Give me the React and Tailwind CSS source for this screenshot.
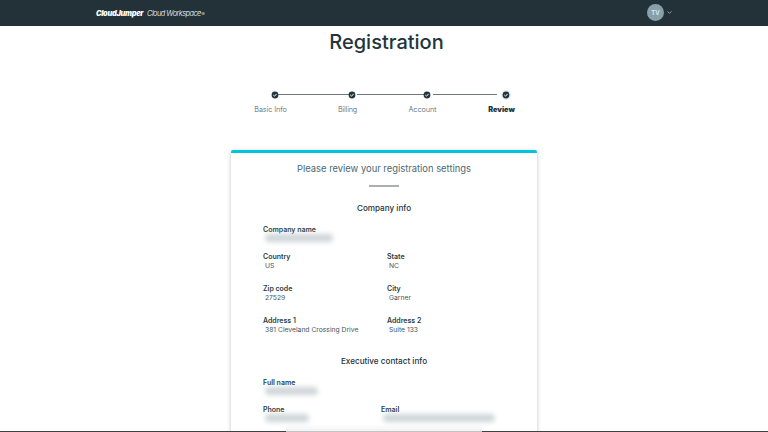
import { ChevronDown } from "lucide-react";

function Check({ halo }) {
  return (
    <svg viewBox="0 0 12 12" className="h-3 w-3 shrink-0">
      {halo && <circle cx="6" cy="6" r="5" fill="#e8eef0" />}
      <circle cx="6" cy="6" r="3.4" fill="#22343c" />
      <path d="M4.3 6l1.2 1.2 2.1-2.3" fill="none" stroke="#fff" strokeWidth="1" />
    </svg>
  );
}

function Field({ label, value, className = "w-[124px]", redacted }) {
  return (
    <div className={`${className} shrink-0`}>
      <div className="h-[9px] text-[7px] leading-[9px] font-semibold text-[#2b3d46]">{label}</div>
      {redacted ? (
        <div className={`${redacted} ml-[2px] h-[8px] rounded-full bg-[#bac4c8] opacity-70 blur-[2.5px]`} />
      ) : (
        <div className="pl-[2px] text-[6.75px] leading-[10px] text-[#3f5660]">{value}</div>
      )}
    </div>
  );
}

export default function App() {
  return (
    <div className="flex h-[432px] w-[768px] flex-col overflow-hidden bg-white font-['Inter',sans-serif] whitespace-nowrap text-[#22343c]">
      <header className="flex h-[26px] shrink-0 items-center justify-between bg-[#233239] pr-[95px] pl-24 text-white">
        <div className="flex items-center gap-[3px] pt-px text-[7.4px] italic">
          <span className="w-[48px] font-black tracking-[-0.3px]">CloudJumper</span>
          <span className="font-light tracking-[-0.5px]">Cloud Workspace<span className="ml-[0.5px] text-[5px]">®</span></span>
        </div>
        <div className="flex items-center gap-[2px] pb-px">
          <span className="flex h-[17px] w-[17px] items-center justify-center rounded-full bg-[#86a1ab] text-[6px] font-semibold text-[#e4ecef]">TV</span>
          <ChevronDown size={7} color="#a9bbc2" strokeWidth={2.5} />
        </div>
      </header>

      <h1 className="mt-[4px] h-6 shrink-0 text-center text-[20px] leading-[25px] font-medium">
        <span className="pl-[5px]">Registration</span>
      </h1>

      <div className="mt-[34.5px] ml-[269.3px] flex h-3 w-[243px] shrink-0 items-center">
        <Check />
        <div className="mr-[-3px] ml-[-3px] h-px w-[71px] bg-[#6d777d]" />
        <Check />
        <div className="mr-[-3px] ml-[-1px] h-px w-[67px] bg-[#6d777d]" />
        <Check />
        <div className="mr-[3px] h-px w-[64px] bg-[#6d777d]" />
        <Check halo />
      </div>
      <div className="mt-[3px] ml-[240px] flex h-[11px] shrink-0 text-center text-[7.3px] leading-[11px] font-light text-[#4b626c]">
        <span className="w-[61px] tracking-[-0.08px]">Basic Info</span>
        <span className="ml-[16px] w-[61px] tracking-[-0.15px]">Billing</span>
        <span className="ml-[14px] w-[61px]">Account</span>
        <span className="ml-[18px] w-[61px] font-black text-[#22343c]">Review</span>
      </div>

      <main className="mt-[35.5px] ml-[231px] h-[290px] w-[306px] shrink-0 rounded-t-[2px] border-t-[3px] border-[#00c4dc] bg-white shadow-[0_1px_4px_rgba(0,0,0,0.24)]">
        <p className="mt-[9px] h-[14px] text-center text-[9.4px] leading-[14px] text-[#4b6873]">Please review your registration settings</p>
        <div className="mx-auto mt-[9px] h-[2px] w-[30px] bg-[#a8b0b4]" />
        <h2 className="mt-[15px] h-[13px] text-center text-[8.15px] leading-[13px] font-medium">Company info</h2>
        <div className="mt-[10px] flex h-[26.5px] pl-8">
          <Field label="Company name" redacted="w-[68px]" />
        </div>
        <div className="flex h-[32.5px] pl-8">
          <Field label="Country" value="US" />
          <Field label="State" value="NC" />
        </div>
        <div className="flex h-[32.3px] pl-8">
          <Field label="Zip code" value="27529" />
          <Field label="City" value="Garner" />
        </div>
        <div className="flex h-[39.2px] pl-8">
          <Field label="Address 1" value="381 Cleveland Crossing Drive" />
          <Field label="Address 2" value="Suite 133" />
        </div>
        <h2 className="h-[13px] text-center text-[8.15px] leading-[13px] font-medium">Executive contact info</h2>
        <div className="mt-[9.7px] flex h-[27px] pl-8">
          <Field label="Full name" redacted="w-[53px]" />
        </div>
        <div className="flex pl-8">
          <Field label="Phone" redacted="w-[44px]" className="w-[118px]" />
          <Field label="Email" redacted="w-[112px]" className="w-[118px]" />
        </div>
      </main>
      <footer className="absolute top-[424px] left-0 flex h-2 w-[768px] items-end">
        <div className="h-px w-[286px] bg-[#443f43]" />
        <div className="h-2 w-[196px] border-b border-[#c4c4c4] bg-linear-to-b from-transparent to-black/5" />
        <div className="h-px w-[286px] bg-[#443f43]" />
      </footer>
    </div>
  );
}
